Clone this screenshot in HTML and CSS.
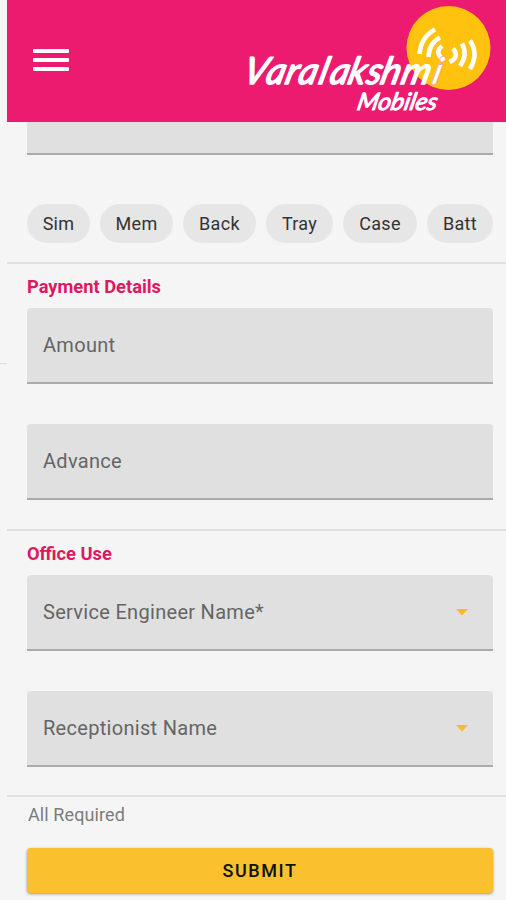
FILE: index.html
```html
<!DOCTYPE html>
<html lang="en">
<head>
<meta charset="utf-8">
<title>Varalakshmi Mobiles</title>
<link rel="stylesheet" href="styles.css">
</head>
<body>
<div class="gutter"></div>
<main class="app">
  <header class="bar">
    <button class="menu" aria-label="Menu"><span></span><span></span><span></span></button>
    <svg class="logo" width="258" height="122" viewBox="240 0 258 122" role="img">
      <circle cx="448.5" cy="48" r="42" fill="#ffc20e"/>
      <g fill="none" stroke="#fff" stroke-width="4.6">
        <path d="M435 29.5Q421 37 419.500 54"/>
        <path d="M440 37.500Q429 43 428.500 57"/>
        <path d="M442 46Q434 52 443 59.500"/>
        <path d="M453 48.500Q460 57 449.500 62"/>
        <path d="M462 43.500Q468 55 460 66"/>
        <path d="M470 40.500Q479 54 470 69"/>
      </g>
      <g class="script">
        <text class="name" transform="translate(245 84) skewX(-14) scale(1.08 1.1)"><tspan x="-3 18 36 48 67 77 94 111 124 143">Varalakshm</tspan><tspan class="last" x="172">i</tspan></text>
        <text class="sub" transform="translate(356 109.500) skewX(-12)" x="0" y="0" textLength="80" lengthAdjust="spacingAndGlyphs">Mobiles</text>
      </g>
    </svg>
  </header>
  <section class="group scrolled">
    <div class="field clipped"></div>
    <div class="chips"><span class="sim">Sim</span><span class="mem">Mem</span><span class="back">Back</span><span class="tray">Tray</span><span class="case">Case</span><span class="batt">Batt</span></div>
  </section>
  <section class="group payment">
    <h2>Payment Details</h2>
    <div class="field">Amount</div>
    <div class="field">Advance</div>
  </section>
  <section class="group office">
    <h2>Office Use</h2>
    <div class="field select">Service Engineer Name*<svg width="12" height="7" viewBox="0 0 12 7"><path d="M0 0h12L6 6.500z"/></svg></div>
    <div class="field select">Receptionist Name<svg width="12" height="7" viewBox="0 0 12 7"><path d="M0 0h12L6 6.500z"/></svg></div>
  </section>
  <section class="group footer">
    <p>All Required</p>
    <button class="submit">SUBMIT</button>
  </section>
</main>
</body>
</html>
```
FILE: styles.css
```css
* { box-sizing: border-box; }
body {
  margin: 0;
  height: 900px;
  overflow: hidden;
  display: flex;
  background: #f5f5f5;
  font-family: Roboto, sans-serif;
}
.gutter { width: 7px; height: 364px; border-bottom: 1px solid #ddd; }
.app { flex: 1; }
.bar {
  height: 122px;
  background: #ec1b70;
  display: flex;
  justify-content: space-between;
  align-items: center;
  padding: 0 8px 0 26px;
}
.menu {
  display: flex;
  flex-direction: column;
  gap: 5px;
  width: 36px;
  margin-top: -2px;
  padding: 0;
  border: 0;
  background: none;
}
.menu span { height: 4px; background: #fff; border-radius: 1px; }
.script {
  fill: #fff;
  stroke: #fff;
  stroke-width: 1.400px;
  stroke-linejoin: round;
  font-family: Lato, sans-serif;
  font-style: italic;
  font-weight: 400;
}
.name { font-size: 34px; }
.last { stroke: #f9a9a0; stroke-width: 2px; paint-order: stroke; }
.sub { font-size: 24px; stroke-width: 1px; }
.group { padding: 0 13px 0 20px; border-bottom: 2px solid #e1e1e1; }
.scrolled { height: 142px; }
.payment { height: 267px; }
.office { height: 266px; }
.footer { border: 0; }
h2 {
  margin: 0;
  padding-top: 11px;
  height: 44px;
  line-height: 23px;
  font-size: 18.300px;
  font-weight: 700;
  color: #df1762;
}
.field {
  height: 76px;
  display: flex;
  align-items: center;
  justify-content: space-between;
  padding: 0 25px 0 16px;
  background: #e0e0e0;
  border-bottom: 2px solid #ababab;
  border-radius: 4px 4px 0 0;
  font-size: 20px;
  letter-spacing: 0.3px;
  color: #656565;
}
.field + .field { margin-top: 40px; }
.clipped { height: 33px; border-radius: 0; }
.select svg { fill: #fbb829; }
.chips { display: flex; justify-content: space-between; margin-top: 49px; }
.chips span {
  height: 39px;
  border-radius: 20px;
  background: #e6e6e6;
  color: #333;
  font-size: 18px;
  letter-spacing: 0.3px;
  line-height: 39px;
  text-align: center;
}
.sim { width: 63px; }
.mem { width: 73px; }
.back { width: 73px; }
.tray { width: 67px; }
.case { width: 74px; }
.batt { width: 66px; }
.footer p {
  margin: 0;
  padding: 7px 0 0 1px;
  height: 51px;
  line-height: 22px;
  font-size: 18px;
  letter-spacing: 0.1px;
  color: #7c7c7c;
}
.submit {
  display: block;
  width: 100%;
  height: 45px;
  border: 0;
  border-radius: 4px;
  background: #fbc02d;
  box-shadow: 0 1px 3px #0006;
  color: #111;
  font: 500 18px Roboto, sans-serif;
  letter-spacing: 1.600px;
}
```
